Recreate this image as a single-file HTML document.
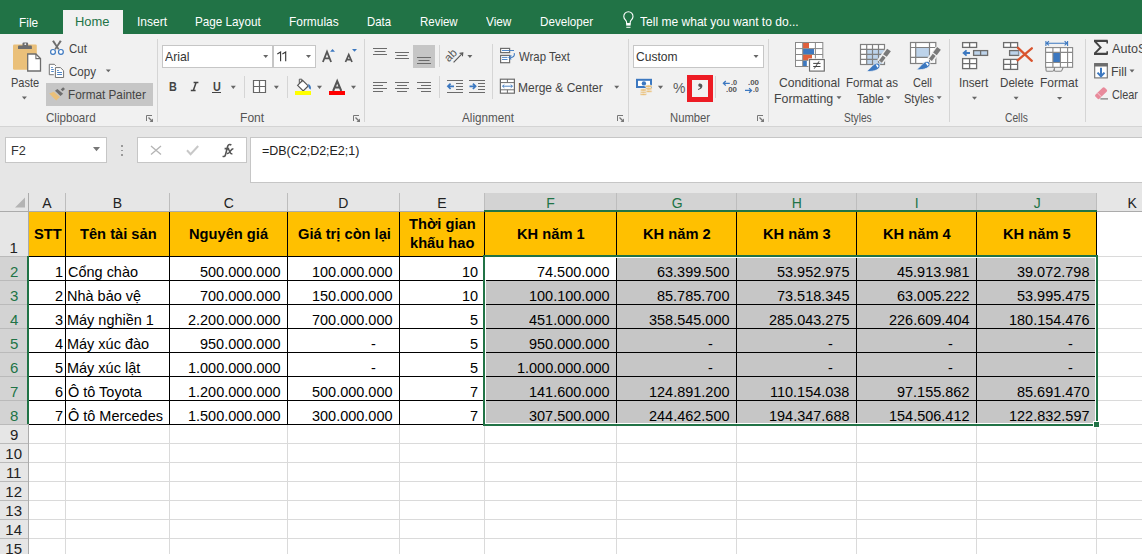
<!DOCTYPE html>
<html><head><meta charset="utf-8"><title>Excel</title>
<style>
*{box-sizing:border-box;margin:0;padding:0}
html,body{width:1142px;height:554px;overflow:hidden;background:#fff;font-family:"Liberation Sans",sans-serif;position:relative}
.a{position:absolute;white-space:nowrap}
svg.a{overflow:visible}
</style></head><body>
<div class="a" style="left:0px;top:0px;width:1142px;height:34px;background:#217346;"></div>
<div class="a" style="left:63px;top:10px;width:60px;height:24px;background:#f1f1f1;"></div>
<div class="a" style="left:19.12px;top:16.00px;font-size:13.5px;line-height:13.5px;color:#fff;font-weight:normal;transform:scaleX(0.8792);transform-origin:0 0;">File</div>
<div class="a" style="left:75.44px;top:15.00px;font-size:13.5px;line-height:13.5px;color:#217346;font-weight:normal;transform:scaleX(0.9564);transform-origin:0 0;">Home</div>
<div class="a" style="left:136.71px;top:15.00px;font-size:13.5px;line-height:13.5px;color:#fff;font-weight:normal;transform:scaleX(0.8906);transform-origin:0 0;">Insert</div>
<div class="a" style="left:195.13px;top:15.00px;font-size:13.5px;line-height:13.5px;color:#fff;font-weight:normal;transform:scaleX(0.8660);transform-origin:0 0;">Page Layout</div>
<div class="a" style="left:289.12px;top:15.00px;font-size:13.5px;line-height:13.5px;color:#fff;font-weight:normal;transform:scaleX(0.8827);transform-origin:0 0;">Formulas</div>
<div class="a" style="left:367.16px;top:15.00px;font-size:13.5px;line-height:13.5px;color:#fff;font-weight:normal;transform:scaleX(0.8426);transform-origin:0 0;">Data</div>
<div class="a" style="left:420.15px;top:15.00px;font-size:13.5px;line-height:13.5px;color:#fff;font-weight:normal;transform:scaleX(0.8503);transform-origin:0 0;">Review</div>
<div class="a" style="left:486.40px;top:15.00px;font-size:13.5px;line-height:13.5px;color:#fff;font-weight:normal;transform:scaleX(0.8747);transform-origin:0 0;">View</div>
<div class="a" style="left:540.44px;top:15.00px;font-size:13.5px;line-height:13.5px;color:#fff;font-weight:normal;transform:scaleX(0.8634);transform-origin:0 0;">Developer</div>
<div class="a" style="left:640.40px;top:15.00px;font-size:13.5px;line-height:13.5px;color:#fff;font-weight:normal;transform:scaleX(0.8922);transform-origin:0 0;">Tell me what you want to do...</div>
<svg class="a" style="left:620px;top:12px" width="17" height="18" viewBox="620 12 17 18"><path d="M626.6 23.6v-1.2c0-1-.5-1.7-1.2-2.5a4.6 4.6 0 1 1 6 0c-.7.8-1.2 1.5-1.2 2.5v1.2z" fill="none" stroke="#fff" stroke-width="1.1"/><rect x="626.2" y="23.6" width="4.4" height="2" fill="#fff"/><path d="M626.3 27.3h4.2" stroke="#fff" stroke-width="1"/></svg>
<div class="a" style="left:0px;top:34px;width:1142px;height:92px;background:#f1f1f1;"></div>
<div class="a" style="left:0px;top:126px;width:1142px;height:1px;background:#d4d4d4;"></div>
<div class="a" style="left:157px;top:39px;width:1px;height:83px;background:#d5d5d5;"></div>
<div class="a" style="left:364px;top:39px;width:1px;height:83px;background:#d5d5d5;"></div>
<div class="a" style="left:628px;top:39px;width:1px;height:83px;background:#d5d5d5;"></div>
<div class="a" style="left:768px;top:39px;width:1px;height:83px;background:#d5d5d5;"></div>
<div class="a" style="left:949px;top:39px;width:1px;height:83px;background:#d5d5d5;"></div>
<div class="a" style="left:1085px;top:39px;width:1px;height:83px;background:#d5d5d5;"></div>
<div class="a" style="left:244px;top:76px;width:1px;height:22px;background:#d5d5d5;"></div>
<div class="a" style="left:287px;top:76px;width:1px;height:22px;background:#d5d5d5;"></div>
<div class="a" style="left:439px;top:45px;width:1px;height:22px;background:#d5d5d5;"></div>
<div class="a" style="left:439px;top:76px;width:1px;height:22px;background:#d5d5d5;"></div>
<div class="a" style="left:492px;top:44px;width:1px;height:55px;background:#d5d5d5;"></div>
<div class="a" style="left:715px;top:76px;width:1px;height:22px;background:#d5d5d5;"></div>
<svg class="a" style="left:11px;top:40px" width="33" height="34" viewBox="11 40 33 34"><rect x="13" y="44.6" width="23.8" height="25.2" rx="1.2" fill="#eac07a"/>
<path d="M18 48.9v-2.2c0-.8.5-1.2 1.2-1.2h3.3v-2.2c0-.6.4-.9.9-.9h3.8c.5 0 .9.3.9.9v2.2h2.6c.8 0 1.2.4 1.2 1.2v2.2z" fill="#6d6d6d"/><circle cx="25.3" cy="44.2" r="0.9" fill="#f1f1f1"/>
<path d="M27.7 54h8.2l4.6 4.6v12.4H27.7z" fill="#fff" stroke="#6d6d6d" stroke-width="1.3"/><path d="M35.9 54v4.6h4.6" fill="none" stroke="#6d6d6d" stroke-width="1.1"/></svg>
<div class="a" style="left:10.95px;top:76.00px;font-size:13px;line-height:13px;color:#444;font-weight:normal;transform:scaleX(0.8497);transform-origin:0 0;">Paste</div>
<svg class="a" style="left:20px;top:95px" width="8" height="6" viewBox="20 95 8 6"><path d="M21.9 96.6H26.9L24.4 99.39999999999999Z" fill="#666"/></svg>
<svg class="a" style="left:48px;top:39px" width="18" height="18" viewBox="48 39 18 18"><path d="M52.1 41.3L53.9 40.3 59.4 48.9 58 49.8z" fill="#6d6d6d"/><path d="M61.7 41.3L59.9 40.3 54.4 48.9 55.8 49.8z" fill="#6d6d6d"/>
<circle cx="53" cy="51.9" r="2.4" fill="#fff" stroke="#3c78c0" stroke-width="1.2"/><circle cx="60.9" cy="51.9" r="2.4" fill="#fff" stroke="#3c78c0" stroke-width="1.2"/></svg>
<div class="a" style="left:68.50px;top:42.00px;font-size:13px;line-height:13px;color:#444;font-weight:normal;transform:scaleX(0.8827);transform-origin:0 0;">Cut</div>
<svg class="a" style="left:48px;top:63px" width="18" height="16" viewBox="48 63 18 16"><path d="M53.8 74.7H49.3V64.3h5l1.6 1.6" fill="#fff" stroke="#6d6d6d" stroke-width="0.95"/>
<path d="M51.2 67.5h1.6M51.2 69.5h2.6M51.2 71.5h2.6" stroke="#3c78c0" stroke-width="0.9"/>
<path d="M55.4 67.6h5l3.2 3.1v6.8h-8.2z" fill="#fff" stroke="#6d6d6d" stroke-width="0.95"/>
<path d="M57.1 70.5h1.7M57.1 72.5h4.9M57.1 74.5h4.9" stroke="#3c78c0" stroke-width="0.9"/></svg>
<div class="a" style="left:68.50px;top:65.00px;font-size:13px;line-height:13px;color:#444;font-weight:normal;transform:scaleX(0.8915);transform-origin:0 0;">Copy</div>
<svg class="a" style="left:104px;top:68px" width="8" height="6" viewBox="104 68 8 6"><path d="M105.8 69.5H110.8L108.3 72.3Z" fill="#666"/></svg>
<div class="a" style="left:46px;top:83px;width:107px;height:23px;background:#c6c6c6;"></div>
<svg class="a" style="left:48px;top:86px" width="19" height="16" viewBox="48 86 19 16"><path d="M49.2 93.5L53.8 91.7 60 97 56.1 100.6z" fill="#eac07a"/>
<path d="M55 90.7L57.4 89.1 63.1 93.7 60.5 95.9z" fill="#6d6d6d"/><path d="M60.7 89.4L63.1 87.2 65 88.9 62.6 91.3z" fill="#6d6d6d"/></svg>
<div class="a" style="left:67.60px;top:88.00px;font-size:13px;line-height:13px;color:#444;font-weight:normal;transform:scaleX(0.9049);transform-origin:0 0;">Format Painter</div>
<div class="a" style="left:45.60px;top:111.00px;font-size:13px;line-height:13px;color:#555;font-weight:normal;transform:scaleX(0.8915);transform-origin:0 0;">Clipboard</div>
<svg class="a" style="left:145px;top:114px" width="10" height="10" viewBox="145 114 10 10"><path d="M146.5 121V115.5H152" fill="none" stroke="#777" stroke-width="1"/><path d="M148.5 117.5L152.2 121.2" stroke="#777" stroke-width="1.3"/><path d="M149.5 122H153V118.5z" fill="#777"/></svg>
<div class="a" style="left:162px;top:45px;width:111px;height:23px;background:#c6c6c6;"></div>
<div class="a" style="left:163px;top:46px;width:109px;height:21px;background:#fff;"></div>
<div class="a" style="left:273px;top:45px;width:43px;height:23px;background:#c6c6c6;"></div>
<div class="a" style="left:274px;top:46px;width:41px;height:21px;background:#fff;"></div>
<div class="a" style="left:165.40px;top:50.30px;font-size:13px;line-height:13px;color:#333;font-weight:normal;transform:scaleX(0.9419);transform-origin:0 0;">Arial</div>
<svg class="a" style="left:262px;top:54px" width="8" height="6" viewBox="262 54 8 6"><path d="M263.2 55H268.2L265.7 58Z" fill="#666"/></svg>
<svg class="a" style="left:276px;top:51px" width="12" height="11" viewBox="276 51 12 11"><path d="M277.3 54L280.6 52V61.2M282.4 54L285.7 52V61.2" fill="none" stroke="#333" stroke-width="1.1"/></svg>
<svg class="a" style="left:305px;top:54px" width="8" height="6" viewBox="305 54 8 6"><path d="M306 55H311L308.5 58Z" fill="#666"/></svg>
<svg class="a" style="left:320px;top:47px" width="17" height="17" viewBox="320 47 17 17"><path d="M322.9 62L327 51.6 331.1 62M324.3 58.3h5.4" fill="none" stroke="#555" stroke-width="1.8"/><path d="M330.1 51.8L332.55 48.9 335 51.8z" fill="#3c78c0"/></svg>
<svg class="a" style="left:343px;top:47px" width="16" height="17" viewBox="343 47 16 17"><path d="M345.5 62L348.75 54.7 352 62M346.6 59.6h4.3" fill="none" stroke="#555" stroke-width="1.7"/><path d="M352 48.9H357L354.5 51.8z" fill="#3c78c0"/></svg>
<div class="a" style="left:168.80px;top:80.00px;font-size:13px;line-height:13px;color:#444;font-weight:bold;transform:scaleX(0.8333);transform-origin:0 0;">B</div>
<svg class="a" style="left:189px;top:80px" width="11" height="13" viewBox="189 80 11 13"><path d="M193.6 82.5H198.4M196.1 82.5L193.3 90.6M190.8 90.6H195.6" fill="none" stroke="#444" stroke-width="1.5"/></svg>
<div class="a" style="left:212.70px;top:80.00px;font-size:13px;line-height:13px;color:#444;font-weight:bold;transform:scaleX(0.8333);transform-origin:0 0;">U</div>
<div class="a" style="left:212px;top:92px;width:9px;height:1px;background:#444;"></div>
<svg class="a" style="left:229px;top:84px" width="8" height="7" viewBox="229 84 8 7"><path d="M230.8 85.7H235.8L233.3 89.0Z" fill="#666"/></svg>
<svg class="a" style="left:251px;top:78px" width="17" height="17" viewBox="251 78 17 17"><path d="M253.5 80.5h12v12h-12zM259.5 80.5v12M253.5 86.5h12" fill="#fff" stroke="#666" stroke-width="1.2"/></svg>
<svg class="a" style="left:272px;top:84px" width="8" height="7" viewBox="272 84 8 7"><path d="M273.9 85.7H278.9L276.4 89.0Z" fill="#666"/></svg>
<svg class="a" style="left:293px;top:77px" width="20" height="19" viewBox="293 77 20 19"><path d="M297.6 85.3l5-5 5.6 5.6-5 5z" fill="#fff" stroke="#555" stroke-width="1.2"/><path d="M299.3 83.5v-4.3h2.5v3" fill="none" stroke="#555" stroke-width="1"/>
<path d="M308.2 83.8c2 .8 3.2 3.2 2.6 5.7-.9-.2-1.8-.9-2.1-2z" fill="#3c78c0"/></svg>
<div class="a" style="left:295px;top:91px;width:16px;height:4px;background:#ffff00;"></div>
<svg class="a" style="left:316px;top:84px" width="8" height="7" viewBox="316 84 8 7"><path d="M317 85.7H322L319.5 89.0Z" fill="#666"/></svg>
<svg class="a" style="left:330px;top:79px" width="14" height="13" viewBox="330 79 14 13"><path d="M333.1 91L337.2 81.2 341.3 91M334.5 87.5h5.4" fill="none" stroke="#555" stroke-width="2"/></svg>
<div class="a" style="left:329px;top:91px;width:16px;height:4px;background:#ff0000;"></div>
<svg class="a" style="left:350px;top:84px" width="8" height="7" viewBox="350 84 8 7"><path d="M351 85.7H356L353.5 89.0Z" fill="#666"/></svg>
<div class="a" style="left:240.07px;top:111.00px;font-size:13px;line-height:13px;color:#555;font-weight:normal;transform:scaleX(0.9291);transform-origin:0 0;">Font</div>
<svg class="a" style="left:352px;top:114px" width="10" height="10" viewBox="352 114 10 10"><path d="M353.5 121V115.5H359" fill="none" stroke="#777" stroke-width="1"/><path d="M355.5 117.5L359.2 121.2" stroke="#777" stroke-width="1.3"/><path d="M356.5 122H360V118.5z" fill="#777"/></svg>
<div class="a" style="left:413px;top:45px;width:22px;height:23px;background:#c6c6c6;"></div>
<svg class="a" style="left:370px;top:46px" width="66" height="20" viewBox="370 46 66 20"><path d="M373 48.5H387" stroke="#6b6b6b" stroke-width="1"/><path d="M374.5 51.5H385.5" stroke="#6b6b6b" stroke-width="1"/><path d="M373 54.5H387" stroke="#6b6b6b" stroke-width="1"/><path d="M395 52.5H409" stroke="#6b6b6b" stroke-width="1"/><path d="M396.5 55.5H407.5" stroke="#6b6b6b" stroke-width="1"/><path d="M395 58.5H409" stroke="#6b6b6b" stroke-width="1"/><path d="M417 57.5H431" stroke="#6b6b6b" stroke-width="1"/><path d="M418.5 60.5H429.5" stroke="#6b6b6b" stroke-width="1"/><path d="M417 63.5H431" stroke="#6b6b6b" stroke-width="1"/></svg>
<svg class="a" style="left:370px;top:80px" width="66" height="14" viewBox="370 80 66 14"><path d="M373 82.5H387" stroke="#6b6b6b" stroke-width="1"/><path d="M373 85.5H383" stroke="#6b6b6b" stroke-width="1"/><path d="M373 88.5H387" stroke="#6b6b6b" stroke-width="1"/><path d="M373 91.5H383" stroke="#6b6b6b" stroke-width="1"/><path d="M395 82.5H409" stroke="#6b6b6b" stroke-width="1"/><path d="M397 85.5H407" stroke="#6b6b6b" stroke-width="1"/><path d="M395 88.5H409" stroke="#6b6b6b" stroke-width="1"/><path d="M397 91.5H407" stroke="#6b6b6b" stroke-width="1"/><path d="M417 82.5H431" stroke="#6b6b6b" stroke-width="1"/><path d="M421 85.5H431" stroke="#6b6b6b" stroke-width="1"/><path d="M417 88.5H431" stroke="#6b6b6b" stroke-width="1"/><path d="M421 91.5H431" stroke="#6b6b6b" stroke-width="1"/></svg>
<div class="a" style="left:444px;top:49.5px;font-size:11.5px;line-height:11.5px;color:#555;transform:rotate(-45deg);transform-origin:50% 50%;width:14px;text-align:center">ab</div>
<svg class="a" style="left:446px;top:47px" width="20" height="18" viewBox="446 47 20 18"><path d="M453.6 62.3L462.6 53.2" stroke="#555" stroke-width="1.1"/><path d="M459.6 53.4L462.8 53L462.4 56.2" fill="none" stroke="#555" stroke-width="1.1"/></svg>
<svg class="a" style="left:466px;top:54px" width="8" height="6" viewBox="466 54 8 6"><path d="M467.4 55H472.4L469.9 58Z" fill="#666"/></svg>
<svg class="a" style="left:445px;top:78px" width="42" height="17" viewBox="445 78 42 17"><path d="M447 80.5H463" stroke="#6b6b6b" stroke-width="1"/><path d="M456 83.5H463" stroke="#6b6b6b" stroke-width="1"/><path d="M456 86.5H463" stroke="#6b6b6b" stroke-width="1"/><path d="M456 89.5H463" stroke="#6b6b6b" stroke-width="1"/><path d="M447 92.5H463" stroke="#6b6b6b" stroke-width="1"/>
<path d="M448 86.3h6M450.6 83.6L447.9 86.3 450.6 89" fill="none" stroke="#3c78c0" stroke-width="1.7"/>
<path d="M469 80.5H485" stroke="#6b6b6b" stroke-width="1"/><path d="M478 83.5H485" stroke="#6b6b6b" stroke-width="1"/><path d="M478 86.5H485" stroke="#6b6b6b" stroke-width="1"/><path d="M478 89.5H485" stroke="#6b6b6b" stroke-width="1"/><path d="M469 92.5H485" stroke="#6b6b6b" stroke-width="1"/>
<path d="M469.5 86.3h6M472.9 83.6L475.6 86.3 472.9 89" fill="none" stroke="#3c78c0" stroke-width="1.7"/></svg>
<svg class="a" style="left:498px;top:46px" width="19" height="19" viewBox="498 46 19 19"><rect x="500.6" y="48.4" width="9" height="4.2" fill="#fff" stroke="#6d6d6d" stroke-width="1.2"/>
<rect x="500.6" y="55.4" width="9" height="7.3" fill="#fff" stroke="#6d6d6d" stroke-width="1.2"/>
<path d="M502 50.5H514M502 57.4h5.5M502 59.5h5.5" stroke="#3c78c0" stroke-width="0.9"/>
<path d="M514.2 53.2c.8 2.6-.8 4.2-4 4.2" fill="none" stroke="#3c78c0" stroke-width="1.1"/><path d="M511.3 55.4L509 57.4 511.3 59.4" fill="none" stroke="#3c78c0" stroke-width="1.1"/></svg>
<div class="a" style="left:519.40px;top:50.00px;font-size:13px;line-height:13px;color:#444;font-weight:normal;transform:scaleX(0.8761);transform-origin:0 0;">Wrap Text</div>
<svg class="a" style="left:498px;top:77px" width="19" height="19" viewBox="498 77 19 19"><rect x="500.4" y="79.2" width="14" height="14" fill="#fff" stroke="#6d6d6d" stroke-width="1.2"/>
<path d="M500.4 82.6h14M500.4 89.8h14M507.4 79.2v3.4M507.4 89.8v3.4" stroke="#6d6d6d" stroke-width="1"/>
<path d="M502.5 86.2h10M504.3 84.6L502.6 86.2 504.3 87.8M510.7 84.6L512.4 86.2 510.7 87.8" fill="none" stroke="#3c78c0" stroke-width="0.9"/></svg>
<div class="a" style="left:518.48px;top:81.30px;font-size:13px;line-height:13px;color:#444;font-weight:normal;transform:scaleX(0.9231);transform-origin:0 0;">Merge &amp; Center</div>
<svg class="a" style="left:613px;top:84px" width="8" height="6" viewBox="613 84 8 6"><path d="M614.2 85.7H619.2L616.7 88.7Z" fill="#666"/></svg>
<div class="a" style="left:462.40px;top:111.00px;font-size:13px;line-height:13px;color:#555;font-weight:normal;transform:scaleX(0.8987);transform-origin:0 0;">Alignment</div>
<svg class="a" style="left:616px;top:114px" width="10" height="10" viewBox="616 114 10 10"><path d="M617.5 121V115.5H623" fill="none" stroke="#777" stroke-width="1"/><path d="M619.5 117.5L623.2 121.2" stroke="#777" stroke-width="1.3"/><path d="M620.5 122H624V118.5z" fill="#777"/></svg>
<div class="a" style="left:633px;top:45px;width:131px;height:23px;background:#c6c6c6;"></div>
<div class="a" style="left:634px;top:46px;width:129px;height:21px;background:#fff;"></div>
<div class="a" style="left:636.30px;top:50.20px;font-size:13px;line-height:13px;color:#333;font-weight:normal;transform:scaleX(0.9258);transform-origin:0 0;">Custom</div>
<svg class="a" style="left:752px;top:54px" width="8" height="6" viewBox="752 54 8 6"><path d="M753.5 55H758.5L756.0 58Z" fill="#666"/></svg>
<svg class="a" style="left:634px;top:77px" width="20" height="20" viewBox="634 77 20 20"><rect x="637" y="79.8" width="14" height="7.2" fill="#fff" stroke="#3c78c0" stroke-width="2"/>
<circle cx="643.9" cy="83.4" r="2.2" fill="#3c78c0"/>
<g fill="#eac07a" stroke="#f1f1f1" stroke-width="0.7"><ellipse cx="648.6" cy="91.2" rx="3.6" ry="1.3"/><ellipse cx="648.6" cy="88.8" rx="3.6" ry="1.3"/><ellipse cx="648.6" cy="86.3" rx="3.6" ry="1.4"/>
<ellipse cx="643.4" cy="94.3" rx="3.4" ry="1.2"/><ellipse cx="643.4" cy="92.1" rx="3.4" ry="1.2"/><ellipse cx="643.4" cy="90" rx="3.4" ry="1.3"/></g></svg>
<svg class="a" style="left:656px;top:84px" width="9" height="7" viewBox="656 84 9 7"><path d="M657.9 85.8H663.1L660.5 89.1Z" fill="#666"/></svg>
<div class="a" style="left:672.60px;top:80.00px;font-size:15px;line-height:15px;color:#5a5a5a;font-weight:normal;transform:scaleX(0.9308);transform-origin:0 0;">%</div>
<div class="a" style="left:687px;top:75px;width:26px;height:27px;background:#ed1c24;"></div>
<div class="a" style="left:692px;top:80px;width:16px;height:17px;background:#f2f2f2;"></div>
<svg class="a" style="left:695px;top:82px" width="10" height="10" viewBox="695 82 10 10"><path d="M699.8 83.6c1.7 0 2.6.9 2.6 2.4 0 1.9-1.6 3.4-4.2 3.9l-.3-.8c1.5-.5 2.3-1.2 2.4-2.2-1.2 0-2-.6-2-1.6 0-1 .7-1.7 1.5-1.7z" fill="#555"/></svg>
<svg class="a" style="left:721px;top:79px" width="18" height="16" viewBox="721 79 18 16"><path d="M723.5 83.3h6.3M725.8 81L723.4 83.3 725.8 85.6" fill="none" stroke="#3c78c0" stroke-width="1.3"/></svg>
<div class="a" style="left:730.60px;top:78.80px;font-size:8px;line-height:8px;color:#555;font-weight:bold;transform:scaleX(0.9138);transform-origin:0 0;">.0</div>
<div class="a" style="left:725.70px;top:86.00px;font-size:8px;line-height:8px;color:#555;font-weight:bold;transform:scaleX(0.9853);transform-origin:0 0;">.00</div>
<div class="a" style="left:747.70px;top:78.80px;font-size:8px;line-height:8px;color:#555;font-weight:bold;transform:scaleX(0.9853);transform-origin:0 0;">.00</div>
<svg class="a" style="left:743px;top:86px" width="11" height="9" viewBox="743 86 11 9"><path d="M745 90.4h6.3M749.1 88.1L751.5 90.4 749.1 92.7" fill="none" stroke="#3c78c0" stroke-width="1.3"/></svg>
<div class="a" style="left:753.00px;top:86.00px;font-size:8px;line-height:8px;color:#555;font-weight:bold;transform:scaleX(0.8446);transform-origin:0 0;">.0</div>
<div class="a" style="left:669.73px;top:111.00px;font-size:13px;line-height:13px;color:#555;font-weight:normal;transform:scaleX(0.8670);transform-origin:0 0;">Number</div>
<svg class="a" style="left:756px;top:114px" width="10" height="10" viewBox="756 114 10 10"><path d="M757.5 121V115.5H763" fill="none" stroke="#777" stroke-width="1"/><path d="M759.5 117.5L763.2 121.2" stroke="#777" stroke-width="1.3"/><path d="M760.5 122H764V118.5z" fill="#777"/></svg>
<svg class="a" style="left:793px;top:40px" width="34" height="34" viewBox="793 40 34 34"><rect x="795.5" y="42.5" width="27.3" height="24" fill="#fff"/>
<rect x="803" y="43" width="6" height="5.2" fill="#e0603c"/><rect x="803" y="49" width="11" height="5.2" fill="#3c78c0"/><rect x="803" y="55" width="9" height="5.2" fill="#e0603c"/><rect x="803" y="61" width="3.8" height="5" fill="#3c78c0"/>
<g fill="none" stroke="#888" stroke-width="1"><rect x="795.5" y="42.5" width="27.3" height="24"/><path d="M795.5 48.6h27.3M795.5 54.5h27.3M795.5 60.4h27.3M802.7 42.5v24M815.4 42.5v24"/></g>
<rect x="808.4" y="58.4" width="17" height="13.8" fill="#fff"/>
<rect x="809.5" y="59.5" width="14.8" height="11.6" fill="#fff" stroke="#6d6d6d" stroke-width="1.2"/>
<path d="M813.2 63.4h7.3M813.2 66.5h7.3M819 61.3L814.3 68.6" stroke="#444" stroke-width="1"/></svg>
<div class="a" style="left:778.50px;top:76.00px;font-size:13px;line-height:13px;color:#444;font-weight:normal;transform:scaleX(0.9362);transform-origin:0 0;">Conditional</div>
<div class="a" style="left:774.45px;top:91.50px;font-size:13px;line-height:13px;color:#444;font-weight:normal;transform:scaleX(0.9524);transform-origin:0 0;">Formatting</div>
<svg class="a" style="left:835px;top:95px" width="8" height="6" viewBox="835 95 8 6"><path d="M836.5 96.2H841.5L839.0 99.2Z" fill="#666"/></svg>
<svg class="a" style="left:858px;top:42px" width="34" height="32" viewBox="858 42 34 32"><rect x="860.5" y="44.5" width="24" height="20" fill="#fff"/>
<rect x="866.7" y="49.4" width="17.8" height="15.1" fill="#bdd3ea"/>
<g fill="none" stroke="#808080" stroke-width="1.2"><rect x="860.5" y="44.5" width="24" height="20"/><path d="M860.5 49.4h24M860.5 54.4h24M860.5 59.4h24M866.7 44.5v20M872.5 44.5v20M878.5 44.5v20"/></g>
<path d="M888.8 50.2L880 62" stroke="#f1f1f1" stroke-width="7"/>
<path d="M889 50L884.9 55.5" stroke="#7a7a7a" stroke-width="4.6"/><path d="M884.2 56.6L880.4 61.6" stroke="#7a7a7a" stroke-width="3.6"/>
<path d="M866.6 71.6C869.5 69.2 872 65.5 874.8 63.8 876.9 62.5 880.1 63 880 65.9 879.9 69.3 875.2 71.6 866.6 71.6z" fill="#3c78c0" stroke="#f1f1f1" stroke-width="0.8"/><path d="M875.6 64.6c1.3-.4 2.8.3 2.9 1.4 0 .7-.3 1.3-.9 1.8z" fill="#fff"/></svg>
<div class="a" style="left:846.41px;top:76.00px;font-size:13px;line-height:13px;color:#444;font-weight:normal;transform:scaleX(0.8877);transform-origin:0 0;">Format as</div>
<div class="a" style="left:856.90px;top:91.50px;font-size:13px;line-height:13px;color:#444;font-weight:normal;transform:scaleX(0.8590);transform-origin:0 0;">Table</div>
<svg class="a" style="left:884px;top:95px" width="8" height="6" viewBox="884 95 8 6"><path d="M885.8 96.2H890.8L888.3 99.2Z" fill="#666"/></svg>
<svg class="a" style="left:908px;top:40px" width="34" height="32" viewBox="908 40 34 32"><rect x="910.5" y="42.5" width="25.3" height="21" fill="#fff"/>
<rect x="915.7" y="47.5" width="13.8" height="9.8" fill="#bdd3ea"/>
<g fill="none" stroke="#808080" stroke-width="1.2"><rect x="910.5" y="42.5" width="25.3" height="21"/><path d="M910.5 47.5h25.3M910.5 57.3h25.3M915.7 42.5v21M929.5 42.5v21"/></g>
<g transform="translate(50 -1.7)"><path d="M888.8 50.2L880 62" stroke="#f1f1f1" stroke-width="7"/>
<path d="M889 50L884.9 55.5" stroke="#7a7a7a" stroke-width="4.6"/><path d="M884.2 56.6L880.4 61.6" stroke="#7a7a7a" stroke-width="3.6"/>
<path d="M866.6 71.6C869.5 69.2 872 65.5 874.8 63.8 876.9 62.5 880.1 63 880 65.9 879.9 69.3 875.2 71.6 866.6 71.6z" fill="#3c78c0" stroke="#f1f1f1" stroke-width="0.8"/><path d="M875.6 64.6c1.3-.4 2.8.3 2.9 1.4 0 .7-.3 1.3-.9 1.8z" fill="#fff"/></g></svg>
<div class="a" style="left:913.00px;top:76.00px;font-size:13px;line-height:13px;color:#444;font-weight:normal;transform:scaleX(0.8442);transform-origin:0 0;">Cell</div>
<div class="a" style="left:903.60px;top:91.50px;font-size:13px;line-height:13px;color:#444;font-weight:normal;transform:scaleX(0.8468);transform-origin:0 0;">Styles</div>
<svg class="a" style="left:935px;top:95px" width="8" height="6" viewBox="935 95 8 6"><path d="M936.6 96.2H941.6L939.1 99.2Z" fill="#666"/></svg>
<div class="a" style="left:844.40px;top:111.00px;font-size:13px;line-height:13px;color:#555;font-weight:normal;transform:scaleX(0.7799);transform-origin:0 0;">Styles</div>
<svg class="a" style="left:960px;top:40px" width="30" height="31" viewBox="960 40 30 31"><g fill="#fff" stroke="#6d6d6d" stroke-width="1.3"><rect x="962.6" y="42.6" width="14" height="4.8"/><rect x="962.6" y="58.6" width="14" height="10"/></g>
<path d="M969.6 42.6v4.8M969.6 58.6v10M962.6 63.6h14" stroke="#6d6d6d" stroke-width="1.3"/>
<rect x="973.6" y="50.6" width="14" height="4.8" fill="#bdd3ea" stroke="#6d6d6d" stroke-width="1.3"/><path d="M980.6 50.6v4.8" stroke="#6d6d6d" stroke-width="1.3"/>
<path d="M963.5 53h6.5M966.6 50.3L963.6 53 966.6 55.7" fill="none" stroke="#3c78c0" stroke-width="1.8"/></svg>
<div class="a" style="left:959.10px;top:76.00px;font-size:13px;line-height:13px;color:#444;font-weight:normal;transform:scaleX(0.8997);transform-origin:0 0;">Insert</div>
<svg class="a" style="left:971px;top:95px" width="8" height="6" viewBox="971 95 8 6"><path d="M972 96.8H977L974.5 99.8Z" fill="#666"/></svg>
<svg class="a" style="left:1001px;top:40px" width="33" height="31" viewBox="1001 40 33 31"><g fill="#fff" stroke="#6d6d6d" stroke-width="1.3"><rect x="1003.6" y="42.6" width="14" height="4.8"/><rect x="1003.6" y="59.4" width="14" height="10"/></g>
<path d="M1010.6 42.6v4.8M1010.6 59.4v10M1003.6 64.4h14" stroke="#6d6d6d" stroke-width="1.3"/>
<rect x="1009.6" y="50.6" width="9" height="4.8" fill="#bdd3ea" stroke="#6d6d6d" stroke-width="1.3"/>
<path d="M1018.6 50.6l3 2.4-3 2.4z" fill="#bdd3ea"/>
<path d="M1018 47.8L1031.8 60.8M1031.8 48.3L1017.6 60.3" stroke="#d9542e" stroke-width="2.3" stroke-linecap="round"/></svg>
<div class="a" style="left:999.61px;top:76.00px;font-size:13px;line-height:13px;color:#444;font-weight:normal;transform:scaleX(0.8941);transform-origin:0 0;">Delete</div>
<svg class="a" style="left:1012px;top:95px" width="8" height="6" viewBox="1012 95 8 6"><path d="M1013.6 96.8H1018.6L1016.1 99.8Z" fill="#666"/></svg>
<svg class="a" style="left:1043px;top:39px" width="32" height="34" viewBox="1043 39 32 34"><path d="M1046.2 43.3h21M1045.9 41v4.9M1067.6 41v4.9M1049 41.2L1046.6 43.3 1049 45.4M1064.6 41.2L1067 43.3 1064.6 45.4" fill="none" stroke="#3c78c0" stroke-width="1.1"/>
<rect x="1045.6" y="47.6" width="27" height="19.7" fill="#fff"/>
<rect x="1053" y="53" width="7.2" height="9" fill="#3c78c0"/>
<g fill="none" stroke="#888" stroke-width="1.1"><rect x="1045.6" y="47.6" width="27" height="19.7"/><path d="M1045.6 52.4h27M1045.6 62.5h27M1052.9 47.6v19.7M1060.4 47.6v19.7M1067.6 47.6v19.7"/>
<path d="M1046 67.3v2.6c0 .9.6 1.4 1.4 1.4h4.8c.8 0 1.3-.5 1.6-1.2l1-2.8M1054.4 67.3v2.6c0 .9.6 1.4 1.4 1.4h4.6c.8 0 1.3-.5 1.6-1.2l1.2-2.8"/></g></svg>
<div class="a" style="left:1039.68px;top:76.00px;font-size:13px;line-height:13px;color:#444;font-weight:normal;transform:scaleX(0.9221);transform-origin:0 0;">Format</div>
<svg class="a" style="left:1056px;top:96px" width="8" height="5" viewBox="1056 96 8 5"><path d="M1057 97H1062.2L1059.6 99.8Z" fill="#666"/></svg>
<div class="a" style="left:1005.30px;top:111.00px;font-size:13px;line-height:13px;color:#555;font-weight:normal;transform:scaleX(0.7893);transform-origin:0 0;">Cells</div>
<svg class="a" style="left:1091px;top:38px" width="19" height="19" viewBox="1091 38 19 19"><path d="M1094 40.9H1107.6M1094 53.8H1107.6" stroke="#444" stroke-width="2.3"/><path d="M1107.2 40.5V43.4M1107.2 54.2V51.3" stroke="#444" stroke-width="1.6"/><path d="M1094.6 41L1100.6 47.4 1094.6 53.7" fill="none" stroke="#444" stroke-width="1.9"/></svg>
<div class="a" style="left:1112.20px;top:42.00px;font-size:13px;line-height:13px;color:#444;font-weight:normal;transform:scaleX(0.9688);transform-origin:0 0;">AutoSum</div>
<svg class="a" style="left:1092px;top:61px" width="18" height="19" viewBox="1092 61 18 19"><rect x="1094.7" y="63.7" width="12.6" height="14.2" fill="#fff" stroke="#6d6d6d" stroke-width="1.1"/><rect x="1094.2" y="63.2" width="13.6" height="3.3" fill="#6d6d6d"/><path d="M1101 67.8v8.4M1097.5 72.6L1101 76.3 1104.5 72.6" fill="none" stroke="#3c78c0" stroke-width="2"/></svg>
<div class="a" style="left:1111.25px;top:65.00px;font-size:13px;line-height:13px;color:#444;font-weight:normal;transform:scaleX(0.9544);transform-origin:0 0;">Fill</div>
<svg class="a" style="left:1128px;top:68px" width="8" height="6" viewBox="1128 68 8 6"><path d="M1129.5 69.6H1134.5L1132.0 72.6Z" fill="#666"/></svg>
<svg class="a" style="left:1093px;top:85px" width="17" height="16" viewBox="1093 85 17 16"><path d="M1095.6 94.6L1102.6 87.8c.7-.7 1.5-.7 2.2 0l1.8 1.8c.7.7.7 1.5 0 2.2L1099.6 98.6c-.7.7-1.5.7-2.2 0l-1.8-1.8c-.7-.7-.7-1.5 0-2.2z" fill="#e88a9b"/><path d="M1097.4 92.8L1101.4 96.8" stroke="#f6d0d7" stroke-width="1"/><path d="M1100.4 98.9h7.6" stroke="#6d6d6d" stroke-width="1.1"/></svg>
<div class="a" style="left:1112.20px;top:87.50px;font-size:13px;line-height:13px;color:#444;font-weight:normal;transform:scaleX(0.8350);transform-origin:0 0;">Clear</div>
<div class="a" style="left:0px;top:127px;width:1142px;height:66px;background:#e6e6e6;"></div>
<div class="a" style="left:5px;top:137px;width:102px;height:26px;background:#c6c6c6;"></div>
<div class="a" style="left:6px;top:138px;width:100px;height:24px;background:#fff;"></div>
<div class="a" style="left:11.42px;top:144.10px;font-size:13px;line-height:13px;color:#333;font-weight:normal;transform:scaleX(0.9755);transform-origin:0 0;">F2</div>
<svg class="a" style="left:92px;top:146px" width="10" height="7" viewBox="92 146 10 7"><path d="M93 147H100L96.5 151.3Z" fill="#777"/></svg>
<div class="a" style="left:121px;top:145px;width:1.5px;height:1.5px;background:#999;"></div>
<div class="a" style="left:121px;top:149.5px;width:1.5px;height:1.5px;background:#999;"></div>
<div class="a" style="left:121px;top:154px;width:1.5px;height:1.5px;background:#999;"></div>
<div class="a" style="left:137px;top:137px;width:110px;height:26px;background:#c6c6c6;"></div>
<div class="a" style="left:138px;top:138px;width:108px;height:24px;background:#fff;"></div>
<svg class="a" style="left:148px;top:143px" width="16" height="14" viewBox="148 143 16 14"><path d="M151 146L161 154.6M161 146L151 154.6" stroke="#b4b4b4" stroke-width="1.3"/></svg>
<svg class="a" style="left:184px;top:143px" width="17" height="14" viewBox="184 143 17 14"><path d="M187 150.3L190.6 154.2 198.2 146" fill="none" stroke="#c8c8c8" stroke-width="2"/></svg>
<svg class="a" style="left:220px;top:142px" width="16" height="16" viewBox="220 142 16 16"><path d="M231.2 145.2c-.6-.9-2.6-1-3.3.6-.4.9-.6 2-1 3.6l-1.5 5.6c-.4 1.4-1.3 1.9-2.8 1.3M224.6 148.6h4.6" fill="none" stroke="#555" stroke-width="1.6"/><path d="M227.3 148.8c1 0 1.4.5 1.9 1.6l1.3 2.6c.4.8.9 1 1.9.7M233.4 148.8c-1.2 0-2 .9-3 2.2l-1.3 1.6c-.6.8-1.2 1-2.2.7" fill="none" stroke="#555" stroke-width="1.5"/></svg>
<div class="a" style="left:250px;top:137px;width:900px;height:46px;background:#c6c6c6;"></div>
<div class="a" style="left:251px;top:138px;width:898px;height:44px;background:#fff;"></div>
<div class="a" style="left:262.40px;top:144.30px;font-size:13px;line-height:13px;color:#222;font-weight:normal;transform:scaleX(0.9587);transform-origin:0 0;">=DB(C2;D2;E2;1)</div>
<div class="a" style="left:29px;top:212px;width:1113px;height:342px;background:#fff;"></div>
<div class="a" style="left:0px;top:193px;width:1142px;height:18px;background:#e6e6e6;"></div>
<div class="a" style="left:485px;top:193px;width:611px;height:18px;background:#d3d3d3;"></div>
<div class="a" style="left:65px;top:193px;width:1px;height:18px;background:#bdbdbd;"></div>
<div class="a" style="left:169px;top:193px;width:1px;height:18px;background:#bdbdbd;"></div>
<div class="a" style="left:287px;top:193px;width:1px;height:18px;background:#bdbdbd;"></div>
<div class="a" style="left:399px;top:193px;width:1px;height:18px;background:#bdbdbd;"></div>
<div class="a" style="left:484px;top:193px;width:1px;height:18px;background:#bdbdbd;"></div>
<div class="a" style="left:616px;top:193px;width:1px;height:18px;background:#bdbdbd;"></div>
<div class="a" style="left:736px;top:193px;width:1px;height:18px;background:#bdbdbd;"></div>
<div class="a" style="left:856px;top:193px;width:1px;height:18px;background:#bdbdbd;"></div>
<div class="a" style="left:976px;top:193px;width:1px;height:18px;background:#bdbdbd;"></div>
<div class="a" style="left:1096px;top:193px;width:1px;height:18px;background:#bdbdbd;"></div>
<div class="a" style="left:28px;top:193px;width:1px;height:19px;background:#ababab;"></div>
<div class="a" style="left:0px;top:211px;width:1142px;height:1px;background:#ababab;"></div>
<div class="a" style="left:484px;top:210px;width:613px;height:2px;background:#217346;"></div>
<svg class="a" style="left:14px;top:197px" width="12" height="11" viewBox="14 197 12 11"><path d="M25 197.5V207.5H15z" fill="#b4b4b4"/></svg>
<div class="a" style="left:0px;top:212px;width:28px;height:342px;background:#e6e6e6;"></div>
<div class="a" style="left:0px;top:257px;width:27px;height:167px;background:#d3d3d3;"></div>
<div class="a" style="left:0px;top:256px;width:28px;height:1px;background:#bababa;"></div>
<div class="a" style="left:0px;top:280px;width:28px;height:1px;background:#bababa;"></div>
<div class="a" style="left:0px;top:304px;width:28px;height:1px;background:#bababa;"></div>
<div class="a" style="left:0px;top:328px;width:28px;height:1px;background:#bababa;"></div>
<div class="a" style="left:0px;top:352px;width:28px;height:1px;background:#bababa;"></div>
<div class="a" style="left:0px;top:376px;width:28px;height:1px;background:#bababa;"></div>
<div class="a" style="left:0px;top:400px;width:28px;height:1px;background:#bababa;"></div>
<div class="a" style="left:0px;top:424px;width:28px;height:1px;background:#bababa;"></div>
<div class="a" style="left:0px;top:443px;width:28px;height:1px;background:#bababa;"></div>
<div class="a" style="left:0px;top:462px;width:28px;height:1px;background:#bababa;"></div>
<div class="a" style="left:0px;top:481px;width:28px;height:1px;background:#bababa;"></div>
<div class="a" style="left:0px;top:500px;width:28px;height:1px;background:#bababa;"></div>
<div class="a" style="left:0px;top:519px;width:28px;height:1px;background:#bababa;"></div>
<div class="a" style="left:0px;top:538px;width:28px;height:1px;background:#bababa;"></div>
<div class="a" style="left:0px;top:557px;width:28px;height:1px;background:#bababa;"></div>
<div class="a" style="left:28px;top:193px;width:1px;height:361px;background:#ababab;"></div>
<div class="a" style="left:27px;top:256px;width:2px;height:168px;background:#217346;"></div>
<div class="a" style="left:29px;top:212px;width:1067px;height:44px;background:#ffc000;"></div>
<div class="a" style="left:65px;top:425px;width:1px;height:129px;background:#dadada;"></div>
<div class="a" style="left:169px;top:425px;width:1px;height:129px;background:#dadada;"></div>
<div class="a" style="left:287px;top:425px;width:1px;height:129px;background:#dadada;"></div>
<div class="a" style="left:399px;top:425px;width:1px;height:129px;background:#dadada;"></div>
<div class="a" style="left:484px;top:425px;width:1px;height:129px;background:#dadada;"></div>
<div class="a" style="left:616px;top:425px;width:1px;height:129px;background:#dadada;"></div>
<div class="a" style="left:736px;top:425px;width:1px;height:129px;background:#dadada;"></div>
<div class="a" style="left:856px;top:425px;width:1px;height:129px;background:#dadada;"></div>
<div class="a" style="left:976px;top:425px;width:1px;height:129px;background:#dadada;"></div>
<div class="a" style="left:1096px;top:425px;width:1px;height:129px;background:#dadada;"></div>
<div class="a" style="left:1096px;top:212px;width:1px;height:44px;background:#dadada;"></div>
<div class="a" style="left:1098px;top:256px;width:44px;height:1px;background:#dadada;"></div>
<div class="a" style="left:1098px;top:280px;width:44px;height:1px;background:#dadada;"></div>
<div class="a" style="left:1098px;top:304px;width:44px;height:1px;background:#dadada;"></div>
<div class="a" style="left:1098px;top:328px;width:44px;height:1px;background:#dadada;"></div>
<div class="a" style="left:1098px;top:352px;width:44px;height:1px;background:#dadada;"></div>
<div class="a" style="left:1098px;top:376px;width:44px;height:1px;background:#dadada;"></div>
<div class="a" style="left:1098px;top:400px;width:44px;height:1px;background:#dadada;"></div>
<div class="a" style="left:1098px;top:424px;width:44px;height:1px;background:#dadada;"></div>
<div class="a" style="left:29px;top:443px;width:1113px;height:1px;background:#dadada;"></div>
<div class="a" style="left:29px;top:462px;width:1113px;height:1px;background:#dadada;"></div>
<div class="a" style="left:29px;top:481px;width:1113px;height:1px;background:#dadada;"></div>
<div class="a" style="left:29px;top:500px;width:1113px;height:1px;background:#dadada;"></div>
<div class="a" style="left:29px;top:519px;width:1113px;height:1px;background:#dadada;"></div>
<div class="a" style="left:29px;top:538px;width:1113px;height:1px;background:#dadada;"></div>
<div class="a" style="left:29px;top:557px;width:1113px;height:1px;background:#dadada;"></div>
<div class="a" style="left:65px;top:212px;width:1px;height:212px;background:#000;"></div>
<div class="a" style="left:169px;top:212px;width:1px;height:212px;background:#000;"></div>
<div class="a" style="left:287px;top:212px;width:1px;height:212px;background:#000;"></div>
<div class="a" style="left:399px;top:212px;width:1px;height:212px;background:#000;"></div>
<div class="a" style="left:484px;top:212px;width:1px;height:212px;background:#000;"></div>
<div class="a" style="left:616px;top:212px;width:1px;height:212px;background:#000;"></div>
<div class="a" style="left:736px;top:212px;width:1px;height:212px;background:#000;"></div>
<div class="a" style="left:856px;top:212px;width:1px;height:212px;background:#000;"></div>
<div class="a" style="left:976px;top:212px;width:1px;height:212px;background:#000;"></div>
<div class="a" style="left:1096px;top:212px;width:1px;height:44px;background:#000;"></div>
<div class="a" style="left:29px;top:256px;width:1068px;height:1px;background:#000;"></div>
<div class="a" style="left:29px;top:280px;width:1068px;height:1px;background:#000;"></div>
<div class="a" style="left:29px;top:304px;width:1068px;height:1px;background:#000;"></div>
<div class="a" style="left:29px;top:328px;width:1068px;height:1px;background:#000;"></div>
<div class="a" style="left:29px;top:352px;width:1068px;height:1px;background:#000;"></div>
<div class="a" style="left:29px;top:376px;width:1068px;height:1px;background:#000;"></div>
<div class="a" style="left:29px;top:400px;width:1068px;height:1px;background:#000;"></div>
<div class="a" style="left:29px;top:424px;width:1068px;height:1px;background:#000;"></div>
<div class="a" style="left:486px;top:258px;width:609px;height:165px;background:#c6c6c6;"></div>
<div class="a" style="left:486px;top:258px;width:130px;height:22px;background:#fff;"></div>
<div class="a" style="left:616px;top:258px;width:1px;height:165px;background:#000;"></div>
<div class="a" style="left:736px;top:258px;width:1px;height:165px;background:#000;"></div>
<div class="a" style="left:856px;top:258px;width:1px;height:165px;background:#000;"></div>
<div class="a" style="left:976px;top:258px;width:1px;height:165px;background:#000;"></div>
<div class="a" style="left:486px;top:280px;width:609px;height:1px;background:#000;"></div>
<div class="a" style="left:486px;top:304px;width:609px;height:1px;background:#000;"></div>
<div class="a" style="left:486px;top:328px;width:609px;height:1px;background:#000;"></div>
<div class="a" style="left:486px;top:352px;width:609px;height:1px;background:#000;"></div>
<div class="a" style="left:486px;top:376px;width:609px;height:1px;background:#000;"></div>
<div class="a" style="left:486px;top:400px;width:609px;height:1px;background:#000;"></div>
<div class="a" style="left:485px;top:257px;width:611px;height:1px;background:#fff;"></div>
<div class="a" style="left:485px;top:423px;width:611px;height:1px;background:#fff;"></div>
<div class="a" style="left:485px;top:257px;width:1px;height:167px;background:#fff;"></div>
<div class="a" style="left:1095px;top:257px;width:1px;height:167px;background:#fff;"></div>
<div class="a" style="left:483px;top:255px;width:615px;height:2px;background:#217346;"></div>
<div class="a" style="left:483px;top:424px;width:610px;height:2px;background:#217346;"></div>
<div class="a" style="left:483px;top:255px;width:2px;height:171px;background:#217346;"></div>
<div class="a" style="left:1096px;top:255px;width:2px;height:166px;background:#217346;"></div>
<div class="a" style="left:1093px;top:421px;width:7px;height:7px;background:#fff;"></div>
<div class="a" style="left:1094px;top:422px;width:5px;height:5px;background:#217346;"></div>
<div class="a" style="left:42.30px;top:195.50px;font-size:14px;line-height:14px;color:#222;font-weight:normal;">A</div>
<div class="a" style="left:112.80px;top:195.50px;font-size:14px;line-height:14px;color:#222;font-weight:normal;">B</div>
<div class="a" style="left:223.80px;top:195.50px;font-size:14px;line-height:14px;color:#222;font-weight:normal;">C</div>
<div class="a" style="left:338.30px;top:195.50px;font-size:14px;line-height:14px;color:#222;font-weight:normal;">D</div>
<div class="a" style="left:437.30px;top:195.50px;font-size:14px;line-height:14px;color:#222;font-weight:normal;">E</div>
<div class="a" style="left:546.30px;top:195.50px;font-size:14px;line-height:14px;color:#217346;font-weight:normal;">F</div>
<div class="a" style="left:671.80px;top:195.50px;font-size:14px;line-height:14px;color:#217346;font-weight:normal;">G</div>
<div class="a" style="left:791.80px;top:195.50px;font-size:14px;line-height:14px;color:#217346;font-weight:normal;">H</div>
<div class="a" style="left:914.80px;top:195.50px;font-size:14px;line-height:14px;color:#217346;font-weight:normal;">I</div>
<div class="a" style="left:1033.80px;top:195.50px;font-size:14px;line-height:14px;color:#217346;font-weight:normal;">J</div>
<div class="a" style="left:1127.50px;top:195.50px;font-size:14px;line-height:14px;color:#222;font-weight:normal;">K</div>
<div class="a" style="left:9.50px;top:239.50px;font-size:15px;line-height:15px;color:#222;font-weight:normal;">1</div>
<div class="a" style="left:10.00px;top:263.50px;font-size:15px;line-height:15px;color:#217346;font-weight:normal;">2</div>
<div class="a" style="left:10.00px;top:287.50px;font-size:15px;line-height:15px;color:#217346;font-weight:normal;">3</div>
<div class="a" style="left:10.00px;top:311.50px;font-size:15px;line-height:15px;color:#217346;font-weight:normal;">4</div>
<div class="a" style="left:10.00px;top:335.50px;font-size:15px;line-height:15px;color:#217346;font-weight:normal;">5</div>
<div class="a" style="left:10.00px;top:359.50px;font-size:15px;line-height:15px;color:#217346;font-weight:normal;">6</div>
<div class="a" style="left:10.00px;top:383.50px;font-size:15px;line-height:15px;color:#217346;font-weight:normal;">7</div>
<div class="a" style="left:10.00px;top:407.50px;font-size:15px;line-height:15px;color:#217346;font-weight:normal;">8</div>
<div class="a" style="left:10.00px;top:426.50px;font-size:15px;line-height:15px;color:#222;font-weight:normal;">9</div>
<div class="a" style="left:5.33px;top:445.50px;font-size:15px;line-height:15px;color:#222;font-weight:normal;">10</div>
<div class="a" style="left:5.89px;top:464.50px;font-size:15px;line-height:15px;color:#222;font-weight:normal;">11</div>
<div class="a" style="left:5.33px;top:483.50px;font-size:15px;line-height:15px;color:#222;font-weight:normal;">12</div>
<div class="a" style="left:5.33px;top:502.50px;font-size:15px;line-height:15px;color:#222;font-weight:normal;">13</div>
<div class="a" style="left:5.33px;top:521.50px;font-size:15px;line-height:15px;color:#222;font-weight:normal;">14</div>
<div class="a" style="left:5.33px;top:540.50px;font-size:15px;line-height:15px;color:#222;font-weight:normal;">15</div>
<div class="a" style="left:33.93px;top:226.00px;font-size:15px;line-height:15px;color:#000;font-weight:bold;transform:scaleX(0.9780);transform-origin:0 0;">STT</div>
<div class="a" style="left:79.96px;top:226.00px;font-size:15px;line-height:15px;color:#000;font-weight:bold;transform:scaleX(0.9780);transform-origin:0 0;">Tên tài sản</div>
<div class="a" style="left:188.86px;top:226.00px;font-size:15px;line-height:15px;color:#000;font-weight:bold;transform:scaleX(0.9780);transform-origin:0 0;">Nguyên giá</div>
<div class="a" style="left:297.81px;top:226.00px;font-size:15px;line-height:15px;color:#000;font-weight:bold;transform:scaleX(0.9780);transform-origin:0 0;">Giá trị còn lại</div>
<div class="a" style="left:517.05px;top:226.00px;font-size:15px;line-height:15px;color:#000;font-weight:bold;transform:scaleX(0.9780);transform-origin:0 0;">KH năm 1</div>
<div class="a" style="left:643.05px;top:226.00px;font-size:15px;line-height:15px;color:#000;font-weight:bold;transform:scaleX(0.9780);transform-origin:0 0;">KH năm 2</div>
<div class="a" style="left:763.05px;top:226.00px;font-size:15px;line-height:15px;color:#000;font-weight:bold;transform:scaleX(0.9780);transform-origin:0 0;">KH năm 3</div>
<div class="a" style="left:882.56px;top:226.00px;font-size:15px;line-height:15px;color:#000;font-weight:bold;transform:scaleX(0.9780);transform-origin:0 0;">KH năm 4</div>
<div class="a" style="left:1003.05px;top:226.00px;font-size:15px;line-height:15px;color:#000;font-weight:bold;transform:scaleX(0.9780);transform-origin:0 0;">KH năm 5</div>
<div class="a" style="left:409.45px;top:216.00px;font-size:15px;line-height:15px;color:#000;font-weight:bold;transform:scaleX(0.9780);transform-origin:0 0;">Thời gian</div>
<div class="a" style="left:410.09px;top:235.00px;font-size:15px;line-height:15px;color:#000;font-weight:bold;transform:scaleX(0.9780);transform-origin:0 0;">khấu hao</div>
<div class="a" style="left:54.65px;top:264.00px;font-size:15px;line-height:15px;color:#000;font-weight:normal;transform:scaleX(0.9650);transform-origin:0 0;">1</div>
<div class="a" style="left:67.50px;top:264.00px;font-size:15px;line-height:15px;color:#000;font-weight:normal;transform:scaleX(0.9650);transform-origin:0 0;">Cổng chào</div>
<div class="a" style="left:200.10px;top:264.00px;font-size:15px;line-height:15px;color:#000;font-weight:normal;transform:scaleX(0.9650);transform-origin:0 0;">500.000.000</div>
<div class="a" style="left:312.10px;top:264.00px;font-size:15px;line-height:15px;color:#000;font-weight:normal;transform:scaleX(0.9650);transform-origin:0 0;">100.000.000</div>
<div class="a" style="left:461.50px;top:264.00px;font-size:15px;line-height:15px;color:#000;font-weight:normal;transform:scaleX(0.9650);transform-origin:0 0;">10</div>
<div class="a" style="left:537.15px;top:264.00px;font-size:15px;line-height:15px;color:#000;font-weight:normal;transform:scaleX(0.9650);transform-origin:0 0;">74.500.000</div>
<div class="a" style="left:657.15px;top:264.00px;font-size:15px;line-height:15px;color:#000;font-weight:normal;transform:scaleX(0.9650);transform-origin:0 0;">63.399.500</div>
<div class="a" style="left:777.15px;top:264.00px;font-size:15px;line-height:15px;color:#000;font-weight:normal;transform:scaleX(0.9650);transform-origin:0 0;">53.952.975</div>
<div class="a" style="left:897.15px;top:264.00px;font-size:15px;line-height:15px;color:#000;font-weight:normal;transform:scaleX(0.9650);transform-origin:0 0;">45.913.981</div>
<div class="a" style="left:1017.15px;top:264.00px;font-size:15px;line-height:15px;color:#000;font-weight:normal;transform:scaleX(0.9650);transform-origin:0 0;">39.072.798</div>
<div class="a" style="left:54.65px;top:288.00px;font-size:15px;line-height:15px;color:#000;font-weight:normal;transform:scaleX(0.9650);transform-origin:0 0;">2</div>
<div class="a" style="left:66.53px;top:288.00px;font-size:15px;line-height:15px;color:#000;font-weight:normal;transform:scaleX(0.9650);transform-origin:0 0;">Nhà bảo vệ</div>
<div class="a" style="left:200.10px;top:288.00px;font-size:15px;line-height:15px;color:#000;font-weight:normal;transform:scaleX(0.9650);transform-origin:0 0;">700.000.000</div>
<div class="a" style="left:312.10px;top:288.00px;font-size:15px;line-height:15px;color:#000;font-weight:normal;transform:scaleX(0.9650);transform-origin:0 0;">150.000.000</div>
<div class="a" style="left:461.50px;top:288.00px;font-size:15px;line-height:15px;color:#000;font-weight:normal;transform:scaleX(0.9650);transform-origin:0 0;">10</div>
<div class="a" style="left:529.10px;top:288.00px;font-size:15px;line-height:15px;color:#000;font-weight:normal;transform:scaleX(0.9650);transform-origin:0 0;">100.100.000</div>
<div class="a" style="left:657.15px;top:288.00px;font-size:15px;line-height:15px;color:#000;font-weight:normal;transform:scaleX(0.9650);transform-origin:0 0;">85.785.700</div>
<div class="a" style="left:777.15px;top:288.00px;font-size:15px;line-height:15px;color:#000;font-weight:normal;transform:scaleX(0.9650);transform-origin:0 0;">73.518.345</div>
<div class="a" style="left:897.15px;top:288.00px;font-size:15px;line-height:15px;color:#000;font-weight:normal;transform:scaleX(0.9650);transform-origin:0 0;">63.005.222</div>
<div class="a" style="left:1017.15px;top:288.00px;font-size:15px;line-height:15px;color:#000;font-weight:normal;transform:scaleX(0.9650);transform-origin:0 0;">53.995.475</div>
<div class="a" style="left:54.65px;top:312.00px;font-size:15px;line-height:15px;color:#000;font-weight:normal;transform:scaleX(0.9650);transform-origin:0 0;">3</div>
<div class="a" style="left:66.53px;top:312.00px;font-size:15px;line-height:15px;color:#000;font-weight:normal;transform:scaleX(0.9650);transform-origin:0 0;">Máy nghiền 1</div>
<div class="a" style="left:188.03px;top:312.00px;font-size:15px;line-height:15px;color:#000;font-weight:normal;transform:scaleX(0.9650);transform-origin:0 0;">2.200.000.000</div>
<div class="a" style="left:312.10px;top:312.00px;font-size:15px;line-height:15px;color:#000;font-weight:normal;transform:scaleX(0.9650);transform-origin:0 0;">700.000.000</div>
<div class="a" style="left:469.55px;top:312.00px;font-size:15px;line-height:15px;color:#000;font-weight:normal;transform:scaleX(0.9650);transform-origin:0 0;">5</div>
<div class="a" style="left:529.10px;top:312.00px;font-size:15px;line-height:15px;color:#000;font-weight:normal;transform:scaleX(0.9650);transform-origin:0 0;">451.000.000</div>
<div class="a" style="left:649.10px;top:312.00px;font-size:15px;line-height:15px;color:#000;font-weight:normal;transform:scaleX(0.9650);transform-origin:0 0;">358.545.000</div>
<div class="a" style="left:769.10px;top:312.00px;font-size:15px;line-height:15px;color:#000;font-weight:normal;transform:scaleX(0.9650);transform-origin:0 0;">285.043.275</div>
<div class="a" style="left:889.10px;top:312.00px;font-size:15px;line-height:15px;color:#000;font-weight:normal;transform:scaleX(0.9650);transform-origin:0 0;">226.609.404</div>
<div class="a" style="left:1009.10px;top:312.00px;font-size:15px;line-height:15px;color:#000;font-weight:normal;transform:scaleX(0.9650);transform-origin:0 0;">180.154.476</div>
<div class="a" style="left:54.65px;top:336.00px;font-size:15px;line-height:15px;color:#000;font-weight:normal;transform:scaleX(0.9650);transform-origin:0 0;">4</div>
<div class="a" style="left:66.53px;top:336.00px;font-size:15px;line-height:15px;color:#000;font-weight:normal;transform:scaleX(0.9650);transform-origin:0 0;">Máy xúc đào</div>
<div class="a" style="left:200.10px;top:336.00px;font-size:15px;line-height:15px;color:#000;font-weight:normal;transform:scaleX(0.9650);transform-origin:0 0;">950.000.000</div>
<div class="a" style="left:370.68px;top:336.00px;font-size:15px;line-height:15px;color:#000;font-weight:normal;transform:scaleX(0.9650);transform-origin:0 0;">-</div>
<div class="a" style="left:469.55px;top:336.00px;font-size:15px;line-height:15px;color:#000;font-weight:normal;transform:scaleX(0.9650);transform-origin:0 0;">5</div>
<div class="a" style="left:529.10px;top:336.00px;font-size:15px;line-height:15px;color:#000;font-weight:normal;transform:scaleX(0.9650);transform-origin:0 0;">950.000.000</div>
<div class="a" style="left:707.67px;top:336.00px;font-size:15px;line-height:15px;color:#000;font-weight:normal;transform:scaleX(0.9650);transform-origin:0 0;">-</div>
<div class="a" style="left:827.67px;top:336.00px;font-size:15px;line-height:15px;color:#000;font-weight:normal;transform:scaleX(0.9650);transform-origin:0 0;">-</div>
<div class="a" style="left:947.67px;top:336.00px;font-size:15px;line-height:15px;color:#000;font-weight:normal;transform:scaleX(0.9650);transform-origin:0 0;">-</div>
<div class="a" style="left:1067.67px;top:336.00px;font-size:15px;line-height:15px;color:#000;font-weight:normal;transform:scaleX(0.9650);transform-origin:0 0;">-</div>
<div class="a" style="left:54.65px;top:360.00px;font-size:15px;line-height:15px;color:#000;font-weight:normal;transform:scaleX(0.9650);transform-origin:0 0;">5</div>
<div class="a" style="left:66.53px;top:360.00px;font-size:15px;line-height:15px;color:#000;font-weight:normal;transform:scaleX(0.9650);transform-origin:0 0;">Máy xúc lật</div>
<div class="a" style="left:188.03px;top:360.00px;font-size:15px;line-height:15px;color:#000;font-weight:normal;transform:scaleX(0.9650);transform-origin:0 0;">1.000.000.000</div>
<div class="a" style="left:370.68px;top:360.00px;font-size:15px;line-height:15px;color:#000;font-weight:normal;transform:scaleX(0.9650);transform-origin:0 0;">-</div>
<div class="a" style="left:469.55px;top:360.00px;font-size:15px;line-height:15px;color:#000;font-weight:normal;transform:scaleX(0.9650);transform-origin:0 0;">5</div>
<div class="a" style="left:517.03px;top:360.00px;font-size:15px;line-height:15px;color:#000;font-weight:normal;transform:scaleX(0.9650);transform-origin:0 0;">1.000.000.000</div>
<div class="a" style="left:707.67px;top:360.00px;font-size:15px;line-height:15px;color:#000;font-weight:normal;transform:scaleX(0.9650);transform-origin:0 0;">-</div>
<div class="a" style="left:827.67px;top:360.00px;font-size:15px;line-height:15px;color:#000;font-weight:normal;transform:scaleX(0.9650);transform-origin:0 0;">-</div>
<div class="a" style="left:947.67px;top:360.00px;font-size:15px;line-height:15px;color:#000;font-weight:normal;transform:scaleX(0.9650);transform-origin:0 0;">-</div>
<div class="a" style="left:1067.67px;top:360.00px;font-size:15px;line-height:15px;color:#000;font-weight:normal;transform:scaleX(0.9650);transform-origin:0 0;">-</div>
<div class="a" style="left:54.65px;top:384.00px;font-size:15px;line-height:15px;color:#000;font-weight:normal;transform:scaleX(0.9650);transform-origin:0 0;">6</div>
<div class="a" style="left:67.50px;top:384.00px;font-size:15px;line-height:15px;color:#000;font-weight:normal;transform:scaleX(0.9650);transform-origin:0 0;">Ô tô Toyota</div>
<div class="a" style="left:188.03px;top:384.00px;font-size:15px;line-height:15px;color:#000;font-weight:normal;transform:scaleX(0.9650);transform-origin:0 0;">1.200.000.000</div>
<div class="a" style="left:312.10px;top:384.00px;font-size:15px;line-height:15px;color:#000;font-weight:normal;transform:scaleX(0.9650);transform-origin:0 0;">500.000.000</div>
<div class="a" style="left:469.55px;top:384.00px;font-size:15px;line-height:15px;color:#000;font-weight:normal;transform:scaleX(0.9650);transform-origin:0 0;">7</div>
<div class="a" style="left:529.10px;top:384.00px;font-size:15px;line-height:15px;color:#000;font-weight:normal;transform:scaleX(0.9650);transform-origin:0 0;">141.600.000</div>
<div class="a" style="left:649.10px;top:384.00px;font-size:15px;line-height:15px;color:#000;font-weight:normal;transform:scaleX(0.9650);transform-origin:0 0;">124.891.200</div>
<div class="a" style="left:770.18px;top:384.00px;font-size:15px;line-height:15px;color:#000;font-weight:normal;transform:scaleX(0.9650);transform-origin:0 0;">110.154.038</div>
<div class="a" style="left:897.15px;top:384.00px;font-size:15px;line-height:15px;color:#000;font-weight:normal;transform:scaleX(0.9650);transform-origin:0 0;">97.155.862</div>
<div class="a" style="left:1017.15px;top:384.00px;font-size:15px;line-height:15px;color:#000;font-weight:normal;transform:scaleX(0.9650);transform-origin:0 0;">85.691.470</div>
<div class="a" style="left:54.65px;top:408.00px;font-size:15px;line-height:15px;color:#000;font-weight:normal;transform:scaleX(0.9650);transform-origin:0 0;">7</div>
<div class="a" style="left:67.50px;top:408.00px;font-size:15px;line-height:15px;color:#000;font-weight:normal;transform:scaleX(0.9650);transform-origin:0 0;">Ô tô Mercedes</div>
<div class="a" style="left:188.03px;top:408.00px;font-size:15px;line-height:15px;color:#000;font-weight:normal;transform:scaleX(0.9650);transform-origin:0 0;">1.500.000.000</div>
<div class="a" style="left:312.10px;top:408.00px;font-size:15px;line-height:15px;color:#000;font-weight:normal;transform:scaleX(0.9650);transform-origin:0 0;">300.000.000</div>
<div class="a" style="left:469.55px;top:408.00px;font-size:15px;line-height:15px;color:#000;font-weight:normal;transform:scaleX(0.9650);transform-origin:0 0;">7</div>
<div class="a" style="left:529.10px;top:408.00px;font-size:15px;line-height:15px;color:#000;font-weight:normal;transform:scaleX(0.9650);transform-origin:0 0;">307.500.000</div>
<div class="a" style="left:649.10px;top:408.00px;font-size:15px;line-height:15px;color:#000;font-weight:normal;transform:scaleX(0.9650);transform-origin:0 0;">244.462.500</div>
<div class="a" style="left:769.10px;top:408.00px;font-size:15px;line-height:15px;color:#000;font-weight:normal;transform:scaleX(0.9650);transform-origin:0 0;">194.347.688</div>
<div class="a" style="left:889.10px;top:408.00px;font-size:15px;line-height:15px;color:#000;font-weight:normal;transform:scaleX(0.9650);transform-origin:0 0;">154.506.412</div>
<div class="a" style="left:1009.10px;top:408.00px;font-size:15px;line-height:15px;color:#000;font-weight:normal;transform:scaleX(0.9650);transform-origin:0 0;">122.832.597</div>
</body></html>
